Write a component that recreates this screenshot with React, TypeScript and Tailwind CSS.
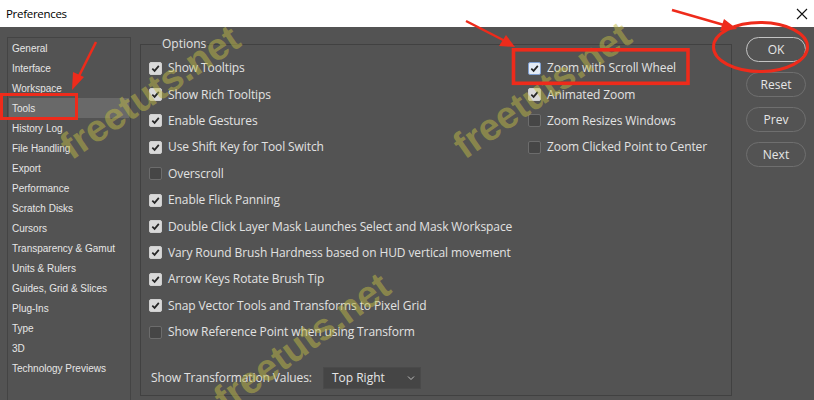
import React from "react";

const sidebarItems = [
  "General",
  "Interface",
  "Workspace",
  "Tools",
  "History Log",
  "File Handling",
  "Export",
  "Performance",
  "Scratch Disks",
  "Cursors",
  "Transparency & Gamut",
  "Units & Rulers",
  "Guides, Grid & Slices",
  "Plug-Ins",
  "Type",
  "3D",
  "Technology Previews",
];

const leftOptions: [string, boolean][] = [
  ["Show Tooltips", true],
  ["Show Rich Tooltips", true],
  ["Enable Gestures", true],
  ["Use Shift Key for Tool Switch", true],
  ["Overscroll", false],
  ["Enable Flick Panning", true],
  ["Double Click Layer Mask Launches Select and Mask Workspace", true],
  ["Vary Round Brush Hardness based on HUD vertical movement", true],
  ["Arrow Keys Rotate Brush Tip", true],
  ["Snap Vector Tools and Transforms to Pixel Grid", true],
  ["Show Reference Point when using Transform", false],
];

const rightOptions: [string, boolean][] = [
  ["Zoom with Scroll Wheel", true],
  ["Animated Zoom", true],
  ["Zoom Resizes Windows", false],
  ["Zoom Clicked Point to Center", false],
];

function Check({ checked, focus }: { checked: boolean; focus?: boolean }) {
  if (checked) {
    return (
      <span
        className={
          "flex h-[13px] w-[13px] shrink-0 items-center justify-center rounded-[2px] border " +
          (focus ? "border-[#7f9fd0] bg-[#e4ebf5]" : "border-[#cfcfcf] bg-[#d9d9d9]")
        }
      >
        <svg width="9" height="9" viewBox="0 0 9 9">
          <path d="M1.3 4.6 L3.6 6.9 L7.8 1.9" fill="none" stroke="#262626" strokeWidth="1.7" />
        </svg>
      </span>
    );
  }
  return (
    <span className="h-[13px] w-[13px] shrink-0 rounded-[2px] border border-[#6c6c6c] bg-[#464646]" />
  );
}

function OptionRow({ label, checked, focus }: { label: string; checked: boolean; focus?: boolean }) {
  return (
    <div className="flex h-[26.4px] items-center gap-[6px]">
      <Check checked={checked} focus={focus} />
      <span className="whitespace-nowrap text-[12px] tracking-[-0.1px] text-[#e2e2e2]">{label}</span>
    </div>
  );
}

function Btn({ label, primary }: { label: string; primary?: boolean }) {
  return (
    <div
      className={
        "flex h-[25px] w-[60px] items-center justify-center rounded-full border text-[12px] text-[#e6e6e6] " +
        (primary ? "border-[#c4c4c4]" : "border-[#6f6f6f]")
      }
    >
      {label}
    </div>
  );
}

function Watermark({ x, y, rot }: { x: number; y: number; rot: string }) {
  return (
    <div
      className={
        "pointer-events-none absolute -translate-x-1/2 -translate-y-1/2 whitespace-nowrap text-[38px] font-bold leading-none text-[rgba(190,184,70,0.52)] " +
        rot
      }
      style={{ left: x, top: y, fontFamily: '"Liberation Sans", Arial, sans-serif' }}
    >
      freetuts.net
    </div>
  );
}

export default function App() {
  return (
    <div
      className="relative h-[400px] w-[814px] overflow-hidden bg-[#535353]"
      style={{ fontFamily: '"Open Sans", "Noto Sans", sans-serif' }}
    >
      {/* Title bar */}
      <div className="flex h-[27px] items-center justify-between bg-white pl-[6px] pr-[6px]">
        <span className="text-[11.5px] tracking-[-0.3px] text-black">Preferences</span>
        <svg width="12" height="12" viewBox="0 0 12 12">
          <path d="M1 1 L11 11 M11 1 L1 11" stroke="#111" strokeWidth="1.1" />
        </svg>
      </div>

      {/* Body */}
      <div className="flex h-[373px] items-start">
        {/* Sidebar */}
        <div
          className="ml-[7px] mt-[10px] h-[380px] w-[124px] border border-[#444444] px-[1px]"
          style={{ fontFamily: '"Liberation Sans", Arial, sans-serif' }}
        >
          {sidebarItems.map((it) => (
            <div
              key={it}
              className={
                "flex h-[20px] items-center pl-[3px] text-[10px] text-[#e6e6e6] " +
                (it === "Tools" ? "bg-[#696969]" : "")
              }
            >
              {it}
            </div>
          ))}
        </div>

        {/* Options group */}
        <fieldset className="ml-[9px] mt-[9px] h-[360px] w-[592px] border border-[#414141] px-[8px] pt-[3px]">
          <legend className="ml-[12px] px-[1px] text-[12px] leading-[16px] text-[#e2e2e2]">Options</legend>
          <div className="flex">
            <div className="w-[379px]">
              {leftOptions.map(([l, c]) => (
                <OptionRow key={l} label={l} checked={c} />
              ))}
              <div className="ml-[2px] mt-[22px] flex items-center gap-[11px]">
                <span className="text-[12px] tracking-[-0.1px] text-[#e2e2e2]">Show Transformation Values:</span>
                <div className="flex h-[22px] w-[98px] items-center justify-between border border-[#4a4a4a] bg-[#454545] pl-[8px] pr-[5px]">
                  <span className="text-[12px] text-[#e6e6e6]">Top Right</span>
                  <svg width="8" height="6" viewBox="0 0 8 6">
                    <path d="M1 1.5 L4 4.5 L7 1.5" fill="none" stroke="#bdbdbd" strokeWidth="1" />
                  </svg>
                </div>
              </div>
            </div>
            <div>
              {rightOptions.map(([l, c], i) => (
                <OptionRow key={l} label={l} checked={c} focus={i === 0} />
              ))}
            </div>
          </div>
        </fieldset>

        {/* Buttons */}
        <div className="ml-[14px] mt-[10px] flex flex-col gap-[10px]">
          <Btn label="OK" primary />
          <Btn label="Reset" />
          <Btn label="Prev" />
          <Btn label="Next" />
        </div>
      </div>

      {/* Watermarks */}
      <Watermark x={150} y={92} rot="-rotate-[34deg]" />
      <Watermark x={542} y={90} rot="-rotate-[35deg]" />
      <Watermark x={302} y={342} rot="-rotate-[36deg]" />

      {/* Red annotations */}
      <svg className="pointer-events-none absolute left-0 top-0" width="814" height="400" viewBox="0 0 814 400">
        <g stroke="#ee2b1b" fill="none">
          <rect x="1.5" y="94.5" width="75" height="24" strokeWidth="3" />
          <rect x="513.5" y="49.8" width="174.5" height="33.5" strokeWidth="3.6" />
          <ellipse cx="760.5" cy="47" rx="47" ry="24.5" strokeWidth="3" />
          <line x1="96" y1="42" x2="78" y2="78" strokeWidth="2.5" />
          <line x1="466" y1="21" x2="505" y2="41" strokeWidth="2.5" />
          <line x1="672" y1="10" x2="724" y2="25" strokeWidth="2.5" />
        </g>
        <g fill="#ee2b1b">
          <polygon points="72,90 73,72 84,77" />
          <polygon points="515,47 499,46 506,35" />
          <polygon points="737,29 720,31 724,19" />
        </g>
      </svg>
    </div>
  );
}
